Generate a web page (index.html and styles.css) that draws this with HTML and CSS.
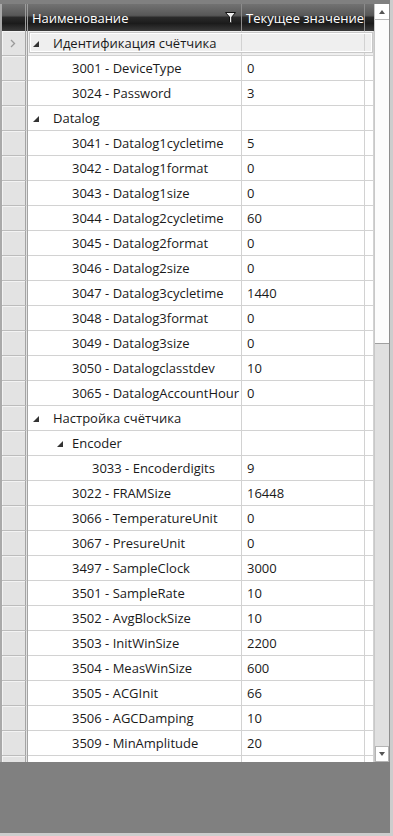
FILE: index.html
```html
<!DOCTYPE html>
<html lang="ru">
<head>
    <meta charset="UTF-8">
    <meta name="viewport" content="width=device-width, initial-scale=1.0">
    <title>Параметры счётчика</title>
    <link rel="stylesheet" href="styles.css">
</head>
<body>

<div class="frame">
    <div class="grid">
        <div class="table">
            <div class="head">
                <div class="corner"></div>
                <div class="hcell name">
                    <span>Наименование</span>
                    <svg class="filter" width="12" height="13" viewBox="0 0 12 13">
                        <path d="M0.5 0.5 H10.5 L6.8 5 V11.5 L4.5 10.3 V5 Z" fill="#ececec" stroke="#111" stroke-width="1"/>
                    </svg>
                </div>
                <div class="hcell value">Текущее значение</div>
                <div class="hcell filler"></div>
            </div>

            <div class="rows">
                <div class="row current">
                    <div class="rh"><svg width="6" height="9" viewBox="0 0 6 9"><path d="M1 1 L4.5 4.5 L1 8" fill="none" stroke="#9a9a9a" stroke-width="1.3"/></svg></div>
                    <div class="cell name lv0"><span class="tg"></span>Идентификация счётчика</div>
                    <div class="cell value"></div>
                    <div class="cell filler"></div>
                </div>
                <div class="row"><div class="rh"></div><div class="cell name lv1"><span class="sl"></span>3001 - DeviceType</div><div class="cell value">0</div><div class="cell filler"></div></div>
                <div class="row"><div class="rh"></div><div class="cell name lv1"><span class="sl"></span>3024 - Password</div><div class="cell value">3</div><div class="cell filler"></div></div>

                <div class="row"><div class="rh"></div><div class="cell name lv0"><span class="tg"></span>Datalog</div><div class="cell value"></div><div class="cell filler"></div></div>
                <div class="row"><div class="rh"></div><div class="cell name lv1"><span class="sl"></span>3041 - Datalog1cycletime</div><div class="cell value">5</div><div class="cell filler"></div></div>
                <div class="row"><div class="rh"></div><div class="cell name lv1"><span class="sl"></span>3042 - Datalog1format</div><div class="cell value">0</div><div class="cell filler"></div></div>
                <div class="row"><div class="rh"></div><div class="cell name lv1"><span class="sl"></span>3043 - Datalog1size</div><div class="cell value">0</div><div class="cell filler"></div></div>
                <div class="row"><div class="rh"></div><div class="cell name lv1"><span class="sl"></span>3044 - Datalog2cycletime</div><div class="cell value">60</div><div class="cell filler"></div></div>
                <div class="row"><div class="rh"></div><div class="cell name lv1"><span class="sl"></span>3045 - Datalog2format</div><div class="cell value">0</div><div class="cell filler"></div></div>
                <div class="row"><div class="rh"></div><div class="cell name lv1"><span class="sl"></span>3046 - Datalog2size</div><div class="cell value">0</div><div class="cell filler"></div></div>
                <div class="row"><div class="rh"></div><div class="cell name lv1"><span class="sl"></span>3047 - Datalog3cycletime</div><div class="cell value">1440</div><div class="cell filler"></div></div>
                <div class="row"><div class="rh"></div><div class="cell name lv1"><span class="sl"></span>3048 - Datalog3format</div><div class="cell value">0</div><div class="cell filler"></div></div>
                <div class="row"><div class="rh"></div><div class="cell name lv1"><span class="sl"></span>3049 - Datalog3size</div><div class="cell value">0</div><div class="cell filler"></div></div>
                <div class="row"><div class="rh"></div><div class="cell name lv1"><span class="sl"></span>3050 - Datalogclasstdev</div><div class="cell value">10</div><div class="cell filler"></div></div>
                <div class="row"><div class="rh"></div><div class="cell name lv1"><span class="sl"></span>3065 - DatalogAccountHour</div><div class="cell value">0</div><div class="cell filler"></div></div>

                <div class="row"><div class="rh"></div><div class="cell name lv0"><span class="tg"></span>Настройка счётчика</div><div class="cell value"></div><div class="cell filler"></div></div>
                <div class="row"><div class="rh"></div><div class="cell name lv1 sub"><span class="tg"></span>Encoder</div><div class="cell value"></div><div class="cell filler"></div></div>
                <div class="row"><div class="rh"></div><div class="cell name lv2"><span class="sl"></span>3033 - Encoderdigits</div><div class="cell value">9</div><div class="cell filler"></div></div>
                <div class="row"><div class="rh"></div><div class="cell name lv1"><span class="sl"></span>3022 - FRAMSize</div><div class="cell value">16448</div><div class="cell filler"></div></div>
                <div class="row"><div class="rh"></div><div class="cell name lv1"><span class="sl"></span>3066 - TemperatureUnit</div><div class="cell value">0</div><div class="cell filler"></div></div>
                <div class="row"><div class="rh"></div><div class="cell name lv1"><span class="sl"></span>3067 - PresureUnit</div><div class="cell value">0</div><div class="cell filler"></div></div>
                <div class="row"><div class="rh"></div><div class="cell name lv1"><span class="sl"></span>3497 - SampleClock</div><div class="cell value">3000</div><div class="cell filler"></div></div>
                <div class="row"><div class="rh"></div><div class="cell name lv1"><span class="sl"></span>3501 - SampleRate</div><div class="cell value">10</div><div class="cell filler"></div></div>
                <div class="row"><div class="rh"></div><div class="cell name lv1"><span class="sl"></span>3502 - AvgBlockSize</div><div class="cell value">10</div><div class="cell filler"></div></div>
                <div class="row"><div class="rh"></div><div class="cell name lv1"><span class="sl"></span>3503 - InitWinSize</div><div class="cell value">2200</div><div class="cell filler"></div></div>
                <div class="row"><div class="rh"></div><div class="cell name lv1"><span class="sl"></span>3504 - MeasWinSize</div><div class="cell value">600</div><div class="cell filler"></div></div>
                <div class="row"><div class="rh"></div><div class="cell name lv1"><span class="sl"></span>3505 - ACGInit</div><div class="cell value">66</div><div class="cell filler"></div></div>
                <div class="row"><div class="rh"></div><div class="cell name lv1"><span class="sl"></span>3506 - AGCDamping</div><div class="cell value">10</div><div class="cell filler"></div></div>
                <div class="row"><div class="rh"></div><div class="cell name lv1"><span class="sl"></span>3509 - MinAmplitude</div><div class="cell value">20</div><div class="cell filler"></div></div>
                <div class="row"><div class="rh"></div><div class="cell name lv1"></div><div class="cell value"></div><div class="cell filler"></div></div>
            </div>
        </div>

        <div class="vscroll">
            <div class="sbtn"><span class="arr up"></span></div>
            <div class="thumb"></div>
            <div class="track"></div>
            <div class="sbtn down"><span class="arr dn"></span></div>
        </div>
    </div>
</div>

</body>
</html>
```

FILE: styles.css
```css
body {
    margin: 0;
    padding: 0;
    background-color: #cdcdcd;
    font-family: "Open Sans", "Noto Sans", sans-serif;
    font-size: 13px;
    color: #1a1a1a;
}

.frame {
    width: 390px;
    height: 833px;
    padding-top: 4px;
    box-sizing: border-box;
    background-color: #808080;
}

.grid {
    display: flex;
    height: 758px;
    border-left: 2px solid #a9a9a9;
    background-color: white;
}

.table {
    flex: 1;
    display: flex;
    flex-direction: column;
    overflow: hidden;
}

/* header */

.head {
    display: flex;
    height: 27px;
    flex-shrink: 0;
    background: linear-gradient(to bottom, #727272 0%, #585858 42%, #2a2a2a 50%, #1b1b1b 72%, #3a3a3a 100%);
    color: white;
    font-size: 13px;
}

.corner {
    width: 23px;
    border-right: 3px double #9c9c9c;
}

.hcell {
    display: flex;
    align-items: center;
    padding-left: 4px;
    box-sizing: border-box;
    border-right: 1px solid #8c8c8c;
    white-space: nowrap;
    overflow: hidden;
}

.hcell .filter {
    margin-left: auto;
    margin-right: 4px;
    margin-top: 1px;
}

.name {
    width: 214px;
    flex-shrink: 0;
}

.value {
    width: 123px;
    flex-shrink: 0;
}

.filler {
    flex: 1;
}

.hcell.filler {
    border-right: none;
}

/* rows */

.rows {
    flex: 1;
    overflow: hidden;
}

.row {
    display: flex;
    height: 25px;
}

.rh {
    width: 26px;
    flex-shrink: 0;
    box-sizing: border-box;
    background-color: #e3e3e3;
    border-bottom: 1px solid #bcbcbc;
    border-right: 3px double #a4a4a4;
    box-shadow: inset 1px 1px 0 #f3f3f3;
    display: flex;
    align-items: center;
    justify-content: center;
    padding-right: 2px;
}

.cell {
    display: flex;
    align-items: center;
    box-sizing: border-box;
    border-right: 1px solid #d2d2d2;
    border-bottom: 1px solid #d2d2d2;
    white-space: nowrap;
    overflow: hidden;
}

.cell.value {
    padding-left: 5px;
}

.lv0 { padding-left: 5px; }
.lv1 { padding-left: 25px; }
.lv2 { padding-left: 45px; }

.sl {
    width: 19px;
    flex-shrink: 0;
}

.tg {
    width: 0;
    height: 0;
    flex-shrink: 0;
    margin-right: 14px;
    margin-top: 1px;
    border-style: solid;
    border-width: 0 0 6px 6px;
    border-color: transparent transparent #333 transparent;
}

.sub .tg {
    margin-left: 4px;
    margin-right: 9px;
}

.row.current .cell {
    background-color: #efefef;
}

.row.current {
    position: relative;
}

.row.current::after {
    content: "";
    position: absolute;
    left: 27px;
    right: 1px;
    top: 1px;
    bottom: 3px;
    border: 1px solid #c8c8c8;
    box-shadow: inset 0 0 0 1px white;
}

/* scrollbar */

.vscroll {
    width: 16px;
    flex-shrink: 0;
    display: flex;
    flex-direction: column;
    box-sizing: border-box;
    border-left: 1px solid #c8c8c8;
    border-right: 1px solid #8e8e8e;
    background-color: #e0e0e0;
}

.sbtn {
    height: 15px;
    flex-shrink: 0;
    background-color: white;
    display: flex;
    align-items: center;
    justify-content: center;
}

.sbtn.down {
    border: 1px solid #b4b4b4;
    height: 14px;
}

.arr {
    width: 0;
    height: 0;
    border-style: solid;
}

.arr.up {
    border-width: 0 3px 4px 3px;
    border-color: transparent transparent #555 transparent;
}

.arr.dn {
    border-width: 4px 3px 0 3px;
    border-color: #555 transparent transparent transparent;
}

.thumb {
    height: 325px;
    flex-shrink: 0;
    background-color: #fcfcfc;
    border-top: 1px solid #b8b8b8;
    border-bottom: 1px solid #a0a0a0;
    box-sizing: border-box;
}

.track {
    flex: 1;
}
```
